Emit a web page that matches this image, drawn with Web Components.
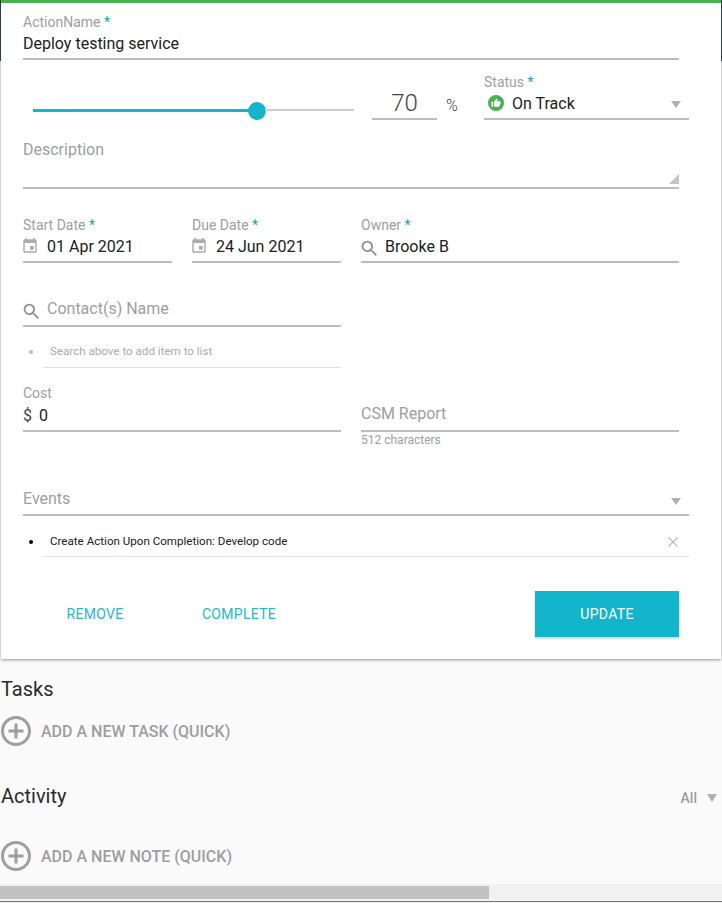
<!DOCTYPE html>
<html lang="en"><head><meta charset="utf-8"><title>Action</title>
<style>
html,body{margin:0;padding:0;background:#fafafa;overflow:hidden}
body{font-family:Roboto,"Liberation Sans",sans-serif;color:#212121}
</style></head><body>
<app-shell>
  <form-card>
    <text-field label="ActionName" required>Deploy testing service</text-field>
    <range-slider slot="progress" value="70"></range-slider>
    <percent-field slot="percent" value="70"></percent-field>
    <text-field slot="status" label="Status" required arrow><ui-icon slot="prefix" name="thumb"></ui-icon>On Track</text-field>
    <text-area-field slot="description" placeholder="Description"></text-area-field>
    <text-field slot="start" label="Start Date" required><ui-icon slot="prefix" name="event"></ui-icon>01 Apr 2021</text-field>
    <text-field slot="due" label="Due Date" required><ui-icon slot="prefix" name="event"></ui-icon>24 Jun 2021</text-field>
    <text-field slot="owner" label="Owner" required><ui-icon slot="prefix" name="search"></ui-icon>Brooke B</text-field>
    <text-field slot="contact" placeholder="Contact(s) Name"><ui-icon slot="prefix" name="search"></ui-icon></text-field>
    <bullet-item slot="contact-list" muted>Search above to add item to list</bullet-item>
    <text-field slot="cost" label="Cost" style="--row-pt:1px"><span slot="prefix" class="dollar">$</span>0</text-field>
    <text-field slot="report" placeholder="CSM Report" hint="512 characters" style="--row-pt:1px"></text-field>
    <text-field slot="events" placeholder="Events" arrow style="--row-pt:2px;--row-h:20px;--arr-mt:7px"></text-field>
    <bullet-item slot="events-list" removable>Create Action Upon Completion: Develop code</bullet-item>
    <action-button slot="remove">REMOVE</action-button>
    <action-button slot="complete">COMPLETE</action-button>
    <action-button slot="update" primary>UPDATE</action-button>
  </form-card>
  <section-title>Tasks</section-title>
  <add-row style="margin-top:13px">ADD A NEW TASK (QUICK)</add-row>
  <section-title filter="All" style="margin-top:36px">Activity</section-title>
  <add-row style="margin-top:31px">ADD A NEW NOTE (QUICK)</add-row>
  <h-scrollbar></h-scrollbar>
</app-shell>
<script>
const FONT='font-family:Roboto,"Liberation Sans",sans-serif;';
const ICONS={
 search:'<svg width="21" height="21" viewBox="0 0 24 24" fill="#8f8f8f"><path d="M15.5 14h-.79l-.28-.27A6.47 6.47 0 0 0 16 9.5 6.5 6.5 0 1 0 9.5 16c1.61 0 3.09-.59 4.23-1.57l.27.28v.79l5 4.99L20.49 19l-4.99-5zm-6 0C7.01 14 5 11.99 5 9.5S7.01 5 9.5 5 14 7.01 14 9.5 11.99 14 9.5 14z"/></svg>',
 event:'<svg width="18" height="18" viewBox="0 0 24 24" fill="#adadad"><path d="M17 12h-5v5h5v-5zM16 1v2H8V1H6v2H5c-1.11 0-1.99.9-1.99 2L3 19c0 1.1.89 2 2 2h14c1.1 0 2-.9 2-2V5c0-1.1-.9-2-2-2h-1V1h-2zm3 18H5V8h14v11z"/></svg>',
 thumb:'<svg width="16" height="16" viewBox="0 0 16 16"><circle cx="8" cy="8" r="8" fill="#4caf50"/><g transform="translate(3 3) scale(.42)" fill="#fff"><path d="M1 21h4V9H1v12zm22-11c0-1.1-.9-2-2-2h-6.31l.95-4.57.03-.32c0-.41-.17-.79-.44-1.06L14.17 1 7.59 7.59C7.22 7.95 7 8.45 7 9v10c0 1.1.9 2 2 2h9c.83 0 1.54-.5 1.84-1.22l3.02-7.05c.09-.23.14-.47.14-.73v-2z"/></g></svg>',
 add:'<svg width="30" height="30" viewBox="2 2 20 20" fill="#9e9e9e"><path d="M13 7h-2v4H7v2h4v4h2v-4h4v-2h-4V7zm-1-5C6.48 2 2 6.48 2 12s4.48 10 10 10 10-4.48 10-10S17.52 2 12 2zm0 18c-4.41 0-8-3.59-8-8s3.59-8 8-8 8 3.59 8 8-3.59 8-8 8z"/></svg>',
 arrow:'<svg width="10" height="7" viewBox="0 0 10 7"><path d="M0 0h10L5 7z" fill="#b0b0b0"/></svg>',
 close:'<svg width="10" height="10" viewBox="0 0 10 10"><path d="M.4.4l9.2 9.2M9.6.4L.4 9.6" stroke="#b5b5b5" stroke-width="1.2" fill="none"/></svg>',
 resize:'<svg width="10" height="10" viewBox="0 0 10 10"><path d="M10 0v10H0z" fill="#c4c4c4"/></svg>'
};
function def(name,css,html){
  customElements.define(name,class extends HTMLElement{
    connectedCallback(){ if(this.shadowRoot)return;
      const r=this.attachShadow({mode:'open'});
      r.innerHTML='<style>'+css+'</style>'+(typeof html==='function'?html(this):html);}
  });
}
const attr=(e,n)=>e.getAttribute(n);
def('ui-icon',':host{display:inline-flex;line-height:0}',e=>ICONS[attr(e,'name')]);
def('text-field',`:host{display:block;${FONT}}
  .label{height:16px;line-height:16px;font-size:14px;color:#9e9e9e;white-space:nowrap}
  .label b{font-weight:400;color:#12a5bb}
  .row{display:flex;align-items:center;font-size:16px;color:#212121;border-bottom:2px solid #bdbdbd;height:var(--row-h,26px);padding-top:var(--row-pt,0);padding-bottom:2px}
  .row.ph{height:var(--row-h,22px);padding-bottom:6px}
  .pre{display:flex;align-items:center;flex:none}
  .pre.search{margin:5px 5px 0 -2px}
  .ph .pre.search{margin:7px 5px 0 -2px}
  .pre.event{margin:0 8px 0 -2px}
  .pre.thumb{margin:0 8px 0 4px}
  .pre.dollar{margin-right:7px}
  .pre.empty{display:none}
  .hold{color:#9e9e9e}
  .txt{white-space:nowrap;flex:1}
  .arr{display:flex;flex:none;margin:3px 8px 0 0}
  .ph .arr{margin-top:var(--arr-mt,9px)}
  .hint{font-size:12px;line-height:16px;color:#9e9e9e}`,
  e=>{
    const label=attr(e,'label'),req=e.hasAttribute('required'),ph=attr(e,'placeholder'),arrow=e.hasAttribute('arrow'),hint=attr(e,'hint');
    const icon=e.querySelector('ui-icon'),kind=icon?attr(icon,'name'):'',dollar=e.querySelector('.dollar');
    if(dollar)dollar.style.cssText='font-size:16px;color:#424242';
    return `<div class="label">${label?label+(req?' <b>*</b>':''):''}</div>
    <div class="row${ph?' ph':''}"><span class="pre ${kind||(dollar?'dollar':'empty')}"><slot name="prefix"></slot></span>
      <span class="txt">${ph?`<span class="hold">${ph}</span>`:''}<slot></slot></span>
      ${arrow?`<span class="arr">${ICONS.arrow}</span>`:''}</div>
    ${hint?`<div class="hint">${hint}</div>`:''}`;
  });
def('percent-field',`:host{display:flex;align-items:flex-end;${FONT}}
  .v{width:65px;height:44px;box-sizing:border-box;border-bottom:2px solid #bdbdbd;text-align:center;font-size:24px;font-weight:300;line-height:54px;color:#424242}
  .p{font-size:16px;font-weight:300;color:#424242;margin-left:9px;line-height:16px;margin-bottom:6px}`,
  e=>`<div class="v">${attr(e,'value')}</div><div class="p">%</div>`);
def('range-slider',`:host{display:flex;height:18px;align-items:flex-start}
  .a{height:3px;margin-top:7px;background:#12b5cb;flex:none;width:216px}
  .k{width:18px;height:18px;border-radius:50%;background:#12b5cb;flex:none;margin:0 -1px}
  .r{height:2px;margin-top:7px;background:#cfcfcf;flex:1}`,
  `<div class="a"></div><div class="k"></div><div class="r"></div>`);
def('text-area-field',`:host{display:block;height:49px;box-sizing:border-box;border-bottom:2px solid #bdbdbd;${FONT}position:relative}
  .ph{font-size:16px;line-height:20px;color:#9e9e9e}
  .rs{position:absolute;right:0;bottom:3px;line-height:0}`,
  e=>`<div class="ph">${attr(e,'placeholder')}</div><div class="rs">${ICONS.resize}</div>`);
def('bullet-item',`:host{display:flex;${FONT}font-size:11.6px;height:29px}
  .dot{width:20px;flex:none}
  .dot i{display:block;width:4px;height:4px;border-radius:50%;margin:11px 0 0 6px;background:#000}
  :host([muted]) .dot i{background:#bdbdbd}
  :host([removable]) .dot i{margin-top:12px}
  .body{flex:1;display:flex;align-items:flex-start;border-bottom:1px solid #e0e0e0;padding-left:7px;line-height:24px;color:#212121}
  :host([removable]) .body{line-height:26px}
  :host([muted]) .body{color:#aaa}
  .t{flex:1;white-space:nowrap}
  .x{line-height:0;margin:9px 11px 0 0}`,
  e=>`<div class="dot"><i></i></div><div class="body"><span class="t"><slot></slot></span>${e.hasAttribute('removable')?`<span class="x">${ICONS.close}</span>`:''}</div>`);
def('action-button',`:host{display:flex;width:144px;height:46px;align-items:center;justify-content:center;${FONT}font-size:14px;letter-spacing:.3px;color:#29b6d0}
  :host([primary]){background:#12b5cb;color:#fff;box-shadow:0 2px 2px rgba(0,0,0,.16)}`,`<slot></slot>`);
def('form-card',`:host{display:block;box-sizing:border-box;margin:0 1px;width:720px;background:#fff;border-top:3px solid #4caf50;
    box-shadow:0 1px 3px rgba(0,0,0,.4);padding:11px 42px 22px 22px}
  .prog{display:flex;margin:14px -10px 0 0;align-items:flex-end}
  .sl{width:321px;margin:0 18px 0 10px;flex:none}
  .per{width:112px;flex:none}
  .st{flex:1}
  .desc{margin-top:20px}
  .two{display:grid;grid-template-columns:1fr 1fr;column-gap:20px}
  .dates{margin-top:28px}
  .contact{margin-top:18px;width:318px}
  .clist{margin-top:12px;width:318px}
  .cost{margin-top:17px}
  .events{margin:22px -10px 0 0}
  .elist{margin:12px -10px 0 0}
  .acts{display:flex;margin-top:34px}
  .sp{flex:1}`,
  `<slot></slot>
  <div class="prog"><div class="sl"><slot name="progress"></slot></div><div class="per"><slot name="percent"></slot></div><div class="st"><slot name="status"></slot></div></div>
  <div class="desc"><slot name="description"></slot></div>
  <div class="two dates"><div class="two"><slot name="start"></slot><slot name="due"></slot></div><slot name="owner"></slot></div>
  <div class="contact"><slot name="contact"></slot></div>
  <div class="clist"><slot name="contact-list"></slot></div>
  <div class="two cost"><slot name="cost"></slot><slot name="report"></slot></div>
  <div class="events"><slot name="events"></slot></div>
  <div class="elist"><slot name="events-list"></slot></div>
  <div class="acts"><slot name="remove"></slot><slot name="complete"></slot><div class="sp"></div><slot name="update"></slot></div>`);
def('section-title',`:host{display:flex;align-items:center;height:28px;padding:0 5px 0 1px;${FONT}font-size:20px;color:#2a2a2a;margin-top:16px}
  .g{flex:1}.f{font-size:14px;font-weight:500;color:#9e9e9e;margin-top:4px}
  .a{display:flex;margin:4px 0 0 10px}`,
  e=>{const f=attr(e,'filter');return `<span class="g"><slot></slot></span>${f?`<span class="f">${f}</span><span class="a"><svg width="10" height="8" viewBox="0 0 10 8"><path d="M0 0h10L5 8z" fill="#b0b0b0"/></svg></span>`:''}`;});
def('add-row',`:host{display:flex;align-items:center;height:30px;padding-left:1px;${FONT}font-size:16px;font-weight:500;color:#9e9e9e;gap:10px}
  i{display:flex;line-height:0}`,`<i>${ICONS.add}</i><span><slot></slot></span>`);
def('h-scrollbar',`:host{display:block;margin-top:13px;height:19px;background:#f1f1f1;box-sizing:border-box;padding-top:2px;position:relative}
  .th{width:489px;height:13px;background:#c1c1c1}
  .l{position:absolute;left:0;right:0;bottom:1px;height:1px;background:#3d83b8}`,
  `<div class="th"></div><div class="l"></div>`);
def('app-shell',`:host{display:block;width:722px;height:903px;overflow:hidden;background:#fafafa;position:relative}
  .edge{position:absolute;top:0;width:1px;height:61px;background:#2c3e50;z-index:2}`,
  `<div class="edge" style="left:0"></div><div class="edge" style="right:0"></div><slot></slot>`);
</script>
</body></html>
